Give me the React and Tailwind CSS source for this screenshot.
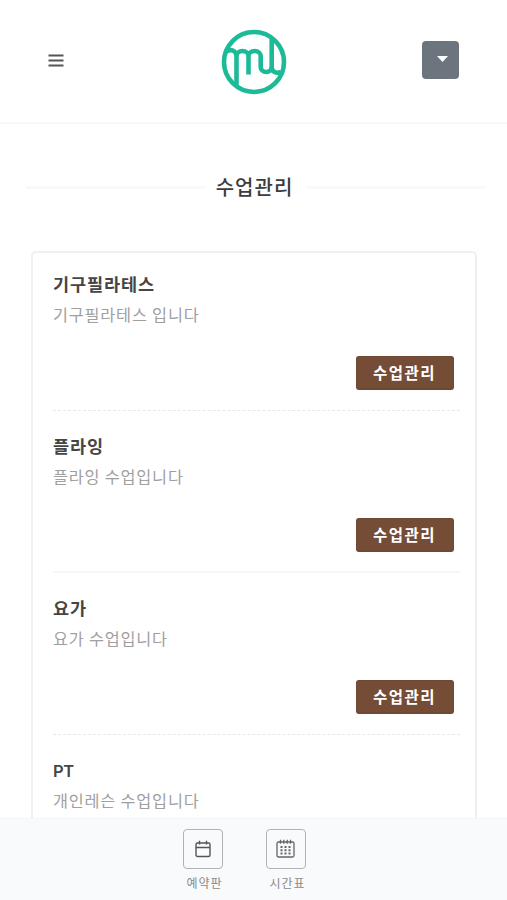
import React from 'react';

const lessons = [
  { id: 1, name: '기구필라테스', description: '기구필라테스 입니다', divider: 'border-b border-dashed border-[#e8e8e8]', editable: true },
  { id: 2, name: '플라잉', description: '플라잉 수업입니다', divider: 'border-b-2 border-solid border-[#f6f6f6]', editable: true },
  { id: 3, name: '요가', description: '요가 수업입니다', divider: 'border-b border-dashed border-[#e8e8e8]', editable: true },
  { id: 4, name: 'PT', description: '개인레슨 수업입니다', divider: '', editable: false },
];

function Logo() {
  return (
    <svg width="66" height="66" viewBox="0 0 66 66" fill="none" stroke="#1dba98" strokeWidth="4.6">
      <circle cx="33" cy="33" r="30" />
      <path d="M6 22.5C10 19.5 15.5 22 15.5 27V57M15.5 27A6 5 0 0 1 27.5 27V45.5M27.5 27A6.1 5 0 0 1 39.7 27V38A5.5 5 0 0 0 50.7 38V9" />
      <path d="M50.7 38C50.7 42.5 55 45 60 43" />
    </svg>
  );
}

function Header() {
  return (
    <header className="h-[124px] shrink-0 flex items-start justify-between border-b-2 border-[#f8f8f8] pl-[48px] pr-[48px]">
      <button type="button" aria-label="menu" className="mt-[53px] w-[37px]">
        <svg width="16" height="15" viewBox="0 0 16 15" fill="none" stroke="#555" strokeWidth="2.2">
          <path d="M0.5 2.5H15.5M0.5 7.5H15.5M0.5 12.5H15.5" />
        </svg>
      </button>
      <div className="mt-[29px] ml-px">
        <Logo />
      </div>
      <button type="button" aria-label="account" className="mt-[41px] w-[37px] h-[38px] rounded-[4px] bg-[#6c757d] flex items-center justify-center">
        <svg width="11" height="6" viewBox="0 0 11 6" fill="#fff" className="ml-[3px] -mt-[2px]">
          <path d="M0 0H11L5.5 6Z" />
        </svg>
      </button>
    </header>
  );
}

function LessonItem({ lesson }) {
  return (
    <li className={`h-[162px] shrink-0 flex flex-col ${lesson.divider}`}>
      <h3 className="mt-[22px] h-[26px] leading-[26px] text-[17.5px] font-bold tracking-[0.9px] text-[#454545]">
        {lesson.name === 'PT' ? <span className="font-['Inter'] text-[16.5px] font-semibold tracking-[-0.3px]">PT</span> : lesson.name}
      </h3>
      <p className="mt-[4px] h-[26px] leading-[26px] text-[16.3px] tracking-[0.8px] text-[#a0a0a0]">{lesson.description}</p>
      {lesson.editable && (
        <button type="button" className="mt-[29px] mr-[6.5px] self-end w-[98px] h-[34px] rounded-[3px] border border-[#6f4832] border-b-2 bg-[#754c35] text-[15.5px] font-bold tracking-[1.5px] leading-none text-white">
          수업관리
        </button>
      )}
    </li>
  );
}

function BottomNav() {
  return (
    <nav className="h-[82px] shrink-0 flex justify-center gap-[43px] border-t border-[#f3f5f6] bg-[#f8fafc] pt-[10px] pr-[18px] text-[12px] text-[#8a8a8a]">
      <a href="#board" className="w-[40px] flex flex-col items-center">
        <span className="w-[40px] h-[40px] rounded-[4px] border-[1.5px] border-[#b2b2b2] flex items-center justify-center">
          <svg width="16" height="18" viewBox="0 0 16 18" fill="none" stroke="#555" strokeWidth="1.4">
            <rect x="1" y="3" width="14" height="13.5" rx="1.5" />
            <path d="M1 7.5H15M4.5 0.8V4.5M11.5 0.8V4.5" />
          </svg>
        </span>
        <span className="mt-[5px] leading-[18px] whitespace-nowrap ml-[3px] tracking-[0.9px]">예약판</span>
      </a>
      <a href="#timetable" className="w-[40px] flex flex-col items-center">
        <span className="w-[40px] h-[40px] rounded-[4px] border-[1.5px] border-[#b2b2b2] flex items-center justify-center">
          <svg width="19" height="19" viewBox="0 0 19 19" fill="none" stroke="#666" strokeWidth="1.3" className="-mt-px -ml-px">
            <rect x="1" y="3" width="17" height="15" rx="1.5" />
            <path d="M4.5 0.8V4.8M7.8 0.8V4.8M11.2 0.8V4.8M14.5 0.8V4.8" />
            <path d="M4.5 8H14.5M4.5 11.3H14.5M4.5 14.6H14.5" strokeWidth="2" strokeDasharray="2 2" />
          </svg>
        </span>
        <span className="mt-[5px] leading-[18px] whitespace-nowrap ml-[3px] tracking-[0.9px]">시간표</span>
      </a>
    </nav>
  );
}

function App() {
  return (
    <div className="h-[900px] flex flex-col overflow-hidden bg-white font-['Noto_Sans_CJK_KR',sans-serif]">
      <Header />
      <main className="flex-1 min-h-0 overflow-hidden flex flex-col">
        <div className="mt-[48px] h-[30px] shrink-0 flex items-center pl-[26px] pr-[22px]">
          <span className="flex-1 h-[3px] bg-[#f9f9f9]" />
          <h2 className="w-[102px] text-center text-[20px] leading-[30px] pr-[2px] font-medium tracking-[1px] text-[#3c3c3c]">수업관리</h2>
          <span className="flex-1 h-[3px] bg-[#f9f9f9]" />
        </div>
        <div className="mt-[49px] ml-[31px] mr-[30px] flex-1 min-h-0 border-2 border-b-0 border-[#f0f0f0] rounded-t-[5px] pl-[20px] pr-[15px]">
          <ul className="flex flex-col -mt-[4px]">
            {lessons.map((lesson) => (
              <LessonItem key={lesson.id} lesson={lesson} />
            ))}
          </ul>
        </div>
      </main>
      <BottomNav />
    </div>
  );
}

export default App;
